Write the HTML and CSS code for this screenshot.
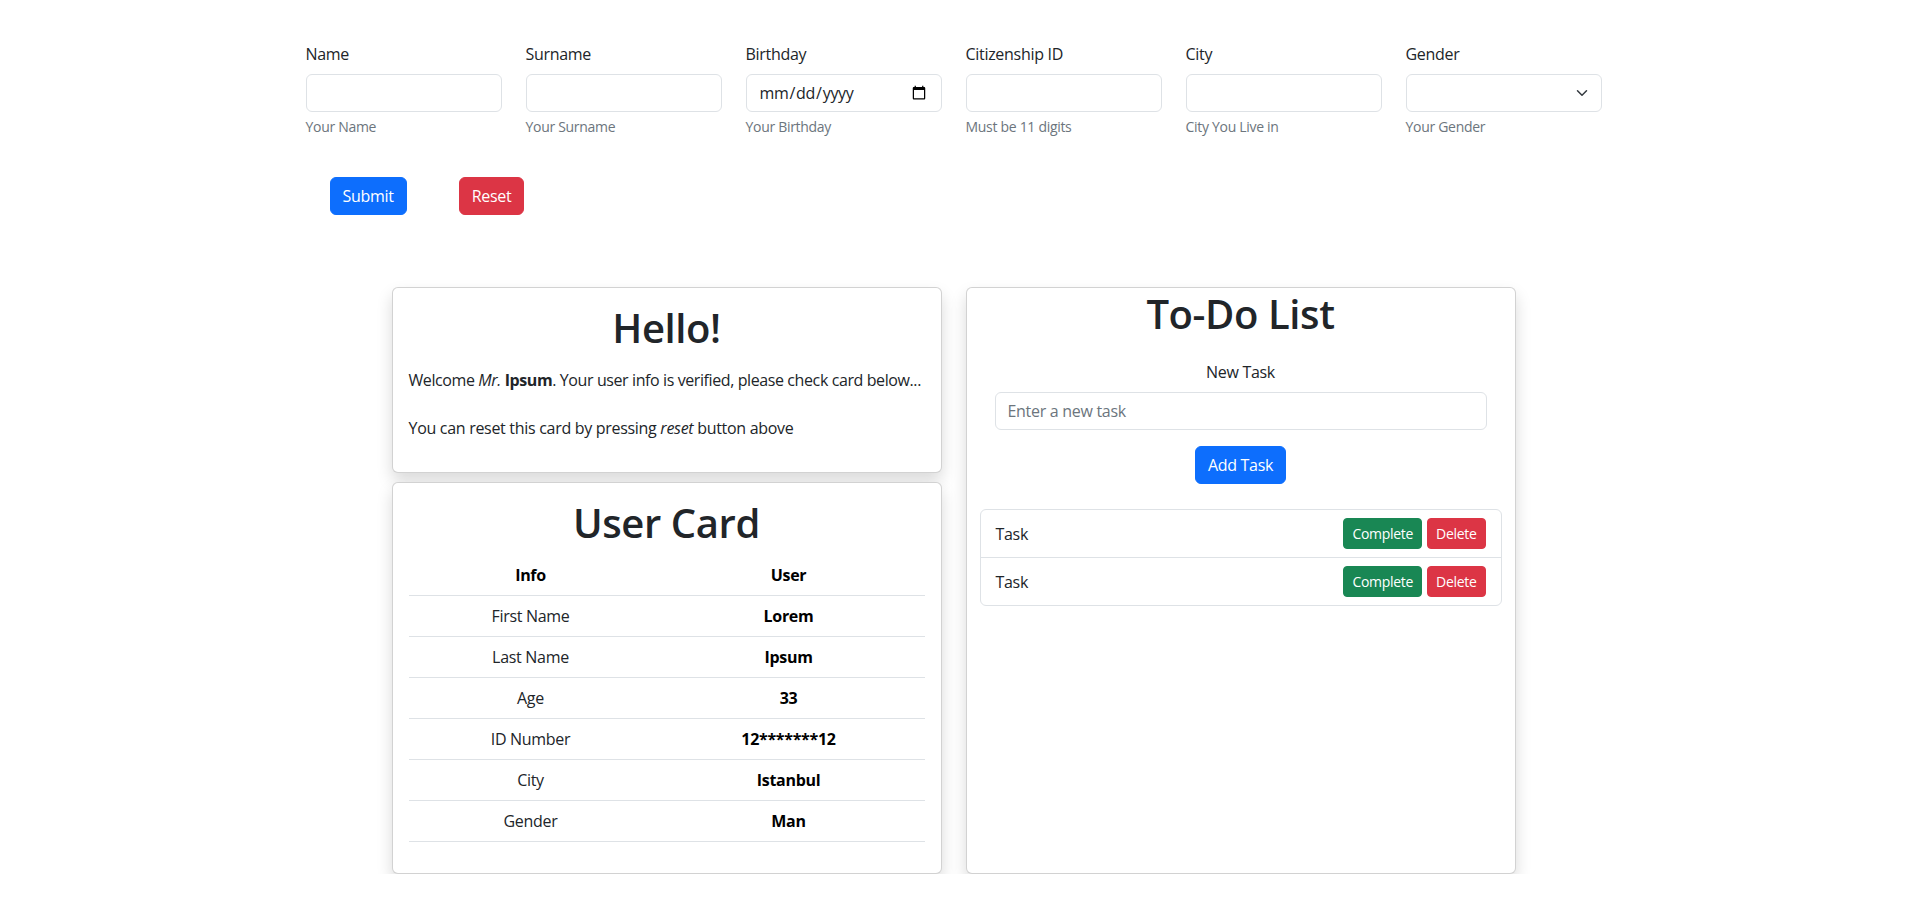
FILE: index.html
```html
<!DOCTYPE html>
<html lang="en">
<head>
<meta charset="utf-8">
<title>User Form</title>
<link rel="stylesheet" href="styles.css">
</head>
<body>
<div class="container">
  <form class="form-grid">
    <div class="field">
      <label class="form-label">Name</label>
      <input class="form-control" type="text">
      <div class="form-text">Your Name</div>
    </div>
    <div class="field">
      <label class="form-label">Surname</label>
      <input class="form-control" type="text">
      <div class="form-text">Your Surname</div>
    </div>
    <div class="field">
      <label class="form-label">Birthday</label>
      <input class="form-control" type="date">
      <div class="form-text">Your Birthday</div>
    </div>
    <div class="field">
      <label class="form-label">Citizenship ID</label>
      <input class="form-control" type="text">
      <div class="form-text">Must be 11 digits</div>
    </div>
    <div class="field">
      <label class="form-label">City</label>
      <input class="form-control" type="text">
      <div class="form-text">City You Live in</div>
    </div>
    <div class="field">
      <label class="form-label">Gender</label>
      <div class="select-wrap">
        <select class="form-select">
          <option></option>
          <option>Man</option>
          <option>Woman</option>
        </select>
        <svg class="select-chevron" width="16" height="12" viewBox="0 0 16 16"><path d="m2 5 6 6 6-6" fill="none" stroke="#343a40" stroke-linecap="round" stroke-linejoin="round" stroke-width="2"/></svg>
      </div>
      <div class="form-text">Your Gender</div>
    </div>
  </form>
  <div class="form-actions">
    <button class="btn btn-primary" type="button">Submit</button>
    <button class="btn btn-danger" type="button">Reset</button>
  </div>
</div>

<div class="cards">
  <div class="left-col">
    <div class="card">
      <div class="card-body">
        <h1 class="card-title hello-title">Hello!</h1>
        <p class="card-text"><span class="nowrap">Welcome <em>Mr.</em> <strong>Ipsum</strong>. Your user info is verified, please check card below...</span><br><br>You can reset this card by pressing <em>reset</em> button above</p>
      </div>
    </div>
    <div class="card">
      <div class="card-body">
        <h1 class="card-title">User Card</h1>
        <table class="table">
          <thead>
            <tr><th class="col-info">Info</th><th>User</th></tr>
          </thead>
          <tbody>
            <tr><td>First Name</td><td class="val">Lorem</td></tr>
            <tr><td>Last Name</td><td class="val">Ipsum</td></tr>
            <tr><td>Age</td><td class="val">33</td></tr>
            <tr><td>ID Number</td><td class="val">12*******12</td></tr>
            <tr><td>City</td><td class="val">Istanbul</td></tr>
            <tr><td>Gender</td><td class="val">Man</td></tr>
          </tbody>
        </table>
      </div>
    </div>
  </div>
  <div class="card todo-card">
    <div class="todo-body">
      <h1 class="card-title todo-title">To-Do List</h1>
      <label class="task-label">New Task</label>
      <input class="form-control task-input" type="text" placeholder="Enter a new task">
      <div class="add-wrap">
        <button class="btn btn-primary" type="button">Add Task</button>
      </div>
      <ul class="list-group">
        <li class="list-item">
          <span>Task</span>
          <span class="item-actions">
            <button class="btn btn-sm btn-success" type="button">Complete</button>
            <button class="btn btn-sm btn-danger" type="button">Delete</button>
          </span>
        </li>
        <li class="list-item">
          <span>Task</span>
          <span class="item-actions">
            <button class="btn btn-sm btn-success" type="button">Complete</button>
            <button class="btn btn-sm btn-danger" type="button">Delete</button>
          </span>
        </li>
      </ul>
    </div>
  </div>
</div>
</body>
</html>
```

FILE: styles.css
```css
* { box-sizing: border-box; }

body {
  margin: 0;
  font-family: "Open Sans", "Noto Sans", "Liberation Sans", sans-serif;
  font-size: 16px;
  line-height: 1.5;
  letter-spacing: -0.3px;
  color: #212529;
  background: #fff;
}

.container {
  width: 1320px;
  margin: 0 auto;
  padding: 42px 12px 0;
}

.form-grid {
  display: grid;
  grid-template-columns: repeat(6, 1fr);
  column-gap: 24px;
  margin: 0;
}

.field { display: flex; flex-direction: column; }

.form-label {
  display: block;
  margin-bottom: 8px;
  line-height: 24px;
}

.form-control, .form-select {
  display: block;
  width: 100%;
  height: 38px;
  padding: 6px 12px;
  font-family: inherit;
  font-size: 16px;
  line-height: 24px;
  letter-spacing: -0.3px;
  color: #212529;
  background: #fff;
  border: 1px solid #dee2e6;
  border-radius: 6px;
  outline: none;
}

.form-control::placeholder { color: #6c757d; }

.select-wrap { position: relative; }
.form-select { appearance: none; -webkit-appearance: none; }
.select-chevron {
  position: absolute;
  right: 12px;
  top: 13px;
  pointer-events: none;
}

.form-text {
  margin-top: 4px;
  font-size: 14px;
  line-height: 21px;
  color: #6c757d;
}

.form-actions {
  display: flex;
  gap: 52px;
  margin-top: 40px;
  padding-left: 24px;
}

.btn {
  display: inline-block;
  padding: 6px 12px;
  font-family: inherit;
  font-size: 16px;
  line-height: 24px;
  letter-spacing: -0.3px;
  color: #fff;
  border: 1px solid transparent;
  border-radius: 6px;
  cursor: pointer;
}
.btn-primary { background: #0d6efd; border-color: #0d6efd; }
.btn-danger { background: #dc3545; border-color: #dc3545; }
.btn-success { background: #198754; border-color: #198754; }
.btn-sm {
  padding: 4px 8px;
  font-size: 14px;
  line-height: 21px;
  border-radius: 4px;
}

.cards {
  display: flex;
  justify-content: center;
  gap: 24px;
  margin-top: 72px;
}

.left-col {
  display: flex;
  flex-direction: column;
  gap: 9px;
  width: 550px;
}

.card {
  background: #fff;
  border: 1px solid rgba(0, 0, 0, 0.175);
  border-radius: 6px;
  box-shadow: 0 8px 16px rgba(0, 0, 0, 0.15);
}

.card-body { padding: 16px; }

.card-title {
  margin: 0 0 8px;
  font-size: 40px;
  font-weight: 600;
  line-height: 48px;
  letter-spacing: -0.4px;
  text-align: center;
}
.hello-title { margin-bottom: 16px; }

.card-text { margin: 0 0 16px; }
.nowrap { white-space: nowrap; letter-spacing: -0.4px; }

.table {
  width: 100%;
  border-collapse: collapse;
  margin-bottom: 15px;
  text-align: center;
}
.table th, .table td {
  padding: 8px;
  line-height: 24px;
  border-bottom: 1px solid #dee2e6;
}
.table th { font-weight: 700; color: #000; }
.col-info { width: 244px; }
.table td.val { font-weight: 700; color: #000; }

.todo-card { width: 550px; }
.todo-body { padding: 2px 0 0; }
.todo-title { margin: 0; }

.task-label {
  display: block;
  text-align: center;
  margin: 22px 0 8px;
  line-height: 24px;
}
.task-input { width: calc(100% - 56px); margin: 0 28px; }

.add-wrap {
  display: flex;
  justify-content: center;
  margin-top: 16px;
}

.list-group {
  list-style: none;
  margin: 25px 13px 0;
  padding: 0;
  border: 1px solid #dee2e6;
  border-radius: 6px;
}
.list-item {
  display: flex;
  justify-content: space-between;
  align-items: center;
  padding: 8px 15px;
}
.list-item + .list-item { border-top: 1px solid #dee2e6; }
.item-actions { display: flex; gap: 5px; }
```
